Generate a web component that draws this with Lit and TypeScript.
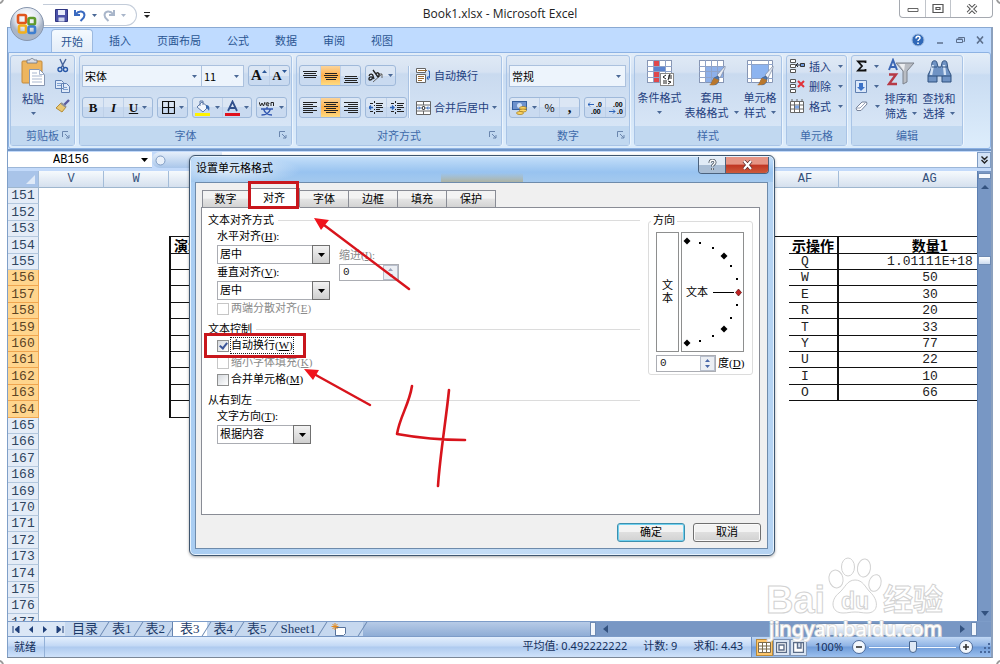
import { LitElement, html, svg, css, nothing } from "lit";
import { customElement } from "lit/decorators.js";
import { classMap } from "lit/directives/class-map.js";

const arrow = html`<svg class="arrow" width="5" height="3" viewBox="0 0 5 3"><path d="M0 0h5L2.500 3z" fill="#4a6896" /></svg>`;

const lines = (rows: number[][]) =>
  html`<svg width="14" height="14" viewBox="0 0 14 14">
    ${rows.map(([y, x1, x2]) => svg`<path d=${`M${x1} ${y}H${x2}`} stroke="#222" stroke-width="1" />`)}
  </svg>`;

const gridIcon = (extra: unknown) => html`<svg width="28" height="28" viewBox="0 0 28 28">
  <rect x="1.500" y="1.500" width="24" height="22" fill="#fff" stroke="#8796b4" />
  <path d="M7.500 1v23M13.500 1v23M19.500 1v23M1 7.500h25M1 12.500h25M1 18.500h25" stroke="#8fa3c8" fill="none" />
  ${extra}
</svg>`;

const brush = svg`<path d="M20 17l-4 2-3 6c4 2 8 0 8-5z" fill="#4d76ad" stroke="#34527c" stroke-width=".6"/><path d="M27 7L19 16l3 3 5-10z" fill="#e9edf5" stroke="#7886a0" stroke-width=".7"/><path d="M16 19l5 2c-1 4-5 6-10 5 3-1 3-5 5-7z" fill="#b9772c"/>`;

@customElement("excel-ribbon")
export class ExcelRibbon extends LitElement {
  static styles = css`
    :host { display: block; }
    * { box-sizing: border-box; }
    button, select, input { font: inherit; color: inherit; margin: 0; }
    button { background: none; border: 0; padding: 0; display: flex; align-items: center; justify-content: center; }
    .tabs { display: flex; height: 25px; padding-left: 42px; padding-right: 6px; background: #bfdbff; border-top: 1px solid #8aa9d2; color: #2a5592; align-items: stretch; }
    .tab { padding: 0 13px; line-height: 23px; }
    .tab.on { background: linear-gradient(#f4faff, #e2ecf8); border: 1px solid #9cb9df; border-bottom: 0; border-radius: 4px 4px 0 0; padding: 0 9px; margin: 1px 3px 0 1px; }
    .tools { margin-left: auto; display: flex; align-items: center; gap: 10px; }
    .tools button { width: 10px; height: 14px; }
    .tools .help { width: 14px; }
    .ribbon { display: grid; grid-template-columns: 65px 213px 206px 124px 148px 61px 112px; gap: 4px; height: 97px; padding: 2px 1px 2px; background: linear-gradient(#e3edf8 0, #d3e2f4 20px, #c9dcf2 22px, #dcecfb 90px); border: 1px solid #8db2e3; border-radius: 0 3px 3px 3px; color: #1f4080; line-height: 15px; }
    .group { border: 1px solid #a9c4e6; border-radius: 3px; display: flex; flex-direction: column; background: linear-gradient(#dfe9f5 0, #d6e2f2 16px, #c9daef 18px, #dce9f8 100%); box-shadow: 1px 0 0 #edf5fd; min-width: 0; }
    .body { flex: 1; display: flex; min-height: 0; }
    .name { height: 19px; background: #c1d8f0; color: #3e6aaa; display: flex; justify-content: center; align-items: center; position: relative; }
    .launch { position: absolute; right: 4px; top: 5px; width: 8px; height: 8px; }
    .rows { display: flex; flex-direction: column; gap: 11px; padding: 9px 0 0 2px; }
    .row { display: flex; gap: 4px; height: 21px; }
    .set { display: flex; border: 1px solid #9fb9da; border-radius: 3px; background: linear-gradient(#dbe6f4 50%, #c9daf0 50%); align-items: stretch; }
    .set button { width: 20px; gap: 4px; color: #111; }
    .set button + button { border-left: 1px solid #bed0e8; }
    .set .wide { width: 29px; }
    .set .hot { background: linear-gradient(#fbd49a, #ffb14d 50%, #ffdc80); }
    .serif { font-family: "Liberation Serif", serif; font-weight: bold; font-size: 13px; }
    .serif.big { font-size: 15px; }
    .set .sized { gap: 0; align-items: center; }
    .combo { display: grid; height: 22px; border: 1px solid #abc1de; background: #edf4fc; color: #000; }
    .combo select { grid-area: 1 / 1; appearance: none; border: 0; background: none; padding: 0 2px; width: 100%; outline: 0; }
    .combo .arrow { grid-area: 1 / 1; justify-self: end; align-self: center; margin-right: 4px; pointer-events: none; }
    .face { width: 120px; }
    .size { width: 43px; margin-left: -5px; }
    .fmt { width: 117px; }
    .sep { width: 2px; margin: 10px 4px 8px 1px; border-left: 1px solid #a9c2e2; border-right: 1px solid #f2f8ff; }
    .plain { display: flex; align-items: center; justify-content: flex-start; gap: 3px; height: 21px; white-space: nowrap; }
    .big-btn { flex-direction: column; justify-content: flex-start; text-align: center; white-space: nowrap; padding-top: 2px; }
    .big-btn span { display: flex; align-items: center; justify-content: center; gap: 5px; height: 15px; }
    .big-btn svg.pic { margin-bottom: 3px; }
    .paste { width: 44px; }
    .stack { display: flex; flex-direction: column; }
    .stack button { height: 20px; gap: 4px; }
    .stack .arrow { margin-left: 3px; }
    .styles { width: 49px; padding-top: 3px; }
    .styles > svg { margin-bottom: 3px; }
    .styles.mid { width: 55px; }
    .styles.end { width: 42px; }
    .edit { width: 38px; }
    .edits { width: 30px; }
  `;

  private launcher(label: string) {
    return html`<button class="launch" aria-label=${label}><svg width="8" height="8" viewBox="0 0 8 8"><path d="M.5 6V.5H6M3 3l4 4M7 4v3H4" fill="none" stroke="#6a86ae" /></svg></button>`;
  }

  render() {
    return html`
      <nav class="tabs">
        <button class="tab on">开始</button>
        ${["插入", "页面布局", "公式", "数据", "审阅", "视图"].map((t) => html`<button class="tab">${t}</button>`)}
        <div class="tools">
          <button class="help" aria-label="帮助"><svg width="14" height="14" viewBox="0 0 14 14"><circle cx="7" cy="7" r="6" fill="#2f68b8" stroke="#9cb8dc" /><path d="M5 5.500c0-3 4-3 4-.5 0 1.500-2 1.500-2 3M7 9.500v1.500" stroke="#fff" stroke-width="1.500" fill="none" /></svg></button>
          <button aria-label="最小化"><svg width="8" height="8" viewBox="0 0 8 8"><path d="M1 7h6" stroke="#5c6f8c" stroke-width="1.500" /></svg></button>
          <button aria-label="还原"><svg width="9" height="8" viewBox="0 0 9 8"><path d="M2.500 2.500v-1h6v4h-1M.5 3.500h6v3h-6zM.5 3h6" stroke="#5c6f8c" fill="none" /></svg></button>
          <button aria-label="关闭"><svg width="8" height="8" viewBox="0 0 8 8"><path d="M1 .5l6 7M7 .5l-6 7" stroke="#5c6f8c" stroke-width="1.600" /></svg></button>
        </div>
      </nav>
      <div class="ribbon">
        <section class="group">
          <div class="body">
            <button class="big-btn paste">
              <svg class="pic" width="26" height="30" viewBox="0 0 26 30"><rect x="2" y="3" width="20" height="22" rx="1" fill="#edb55e" stroke="#c3893a" /><path d="M7 5V2h3c0-2 4-2 4 0h3v3z" fill="#d8dce4" stroke="#6d7480" stroke-width=".8" /><path d="M9.500 11.500h10l5 5v11h-15z" fill="#fff" stroke="#8796b0" /><path d="M19.500 11.500v5h5M12 15h5M12 18h10M12 21h10M12 24h10" fill="none" stroke="#a9b7cf" /></svg>
              <span>粘贴</span><span>${arrow}</span>
            </button>
            <div class="stack">
              <button aria-label="剪切"><svg width="14" height="16" viewBox="0 0 14 16"><path d="M4 1l4 9M10 1L5 10" stroke="#44629a" stroke-width="1.400" /><circle cx="4" cy="11.500" r="2" fill="none" stroke="#2858a8" stroke-width="1.400" /><circle cx="9.500" cy="11.500" r="2" fill="none" stroke="#2858a8" stroke-width="1.400" /></svg></button>
              <button aria-label="复制"><svg width="15" height="14" viewBox="0 0 15 14"><path d="M.5 1.500h6l2 2v6h-8zM6.500 4.500h5l3 3v6h-8z" fill="#dfeaf9" stroke="#6081b4" /><path d="M2 4.500h4M2 6.500h4M8 8.500h4M8 10.500h5" stroke="#7ea0d0" /></svg></button>
              <button aria-label="格式刷"><svg width="15" height="14" viewBox="0 0 15 14"><path d="M14 1L9 6" stroke="#5a5ca0" stroke-width="2.400" /><path d="M6 4l5 4-4 5-6-4z" fill="#e9c772" stroke="#b58c36" /><path d="M6 4l5 4" stroke="#8d9099" stroke-width="2" /></svg></button>
            </div>
          </div>
          <div class="name">剪贴板${this.launcher("剪贴板选项")}</div>
        </section>

        <section class="group">
          <div class="body rows">
            <div class="row">
              <label class="combo face"><select aria-label="字体"><option>宋体</option></select>${arrow}</label>
              <label class="combo size"><select aria-label="字号"><option>11</option></select>${arrow}</label>
              <div class="set">
                <button class="serif big sized" aria-label="增大字号">A<svg width="5" height="12" viewBox="0 0 5 12"><path d="M0 3h5L2.500 0z" fill="#2b5797" /></svg></button>
                <button class="serif sized" aria-label="减小字号">A<svg width="5" height="12" viewBox="0 0 5 12"><path d="M0 0h5L2.500 3z" fill="#2b5797" /></svg></button>
              </div>
            </div>
            <div class="row">
              <div class="set"><button class="serif">B</button><button class="serif"><i>I</i></button><button class="serif wide"><u>U</u>${arrow}</button></div>
              <div class="set"><button class="wide" aria-label="边框"><svg width="13" height="13" viewBox="0 0 13 13"><path d="M.5.5h12v12H.5zM6.500 0v13M0 6.500h13" fill="none" stroke="#111" stroke-width="1.200" /></svg>${arrow}</button></div>
              <div class="set">
                <button class="wide" aria-label="填充颜色"><svg width="16" height="16" viewBox="0 0 16 16"><path d="M2 7l5-5 6 5-5 5z" fill="#f3f7fd" stroke="#5f7ba8" /><path d="M5 6V1h3v4" fill="none" stroke="#5f7ba8" /><path d="M11 5c3 0 4 2 3 6-1-2-2-3-3-3z" fill="#3869ae" /><rect y="13" width="15" height="3" fill="#fff200" /></svg>${arrow}</button>
                <button class="wide" aria-label="字体颜色"><svg width="15" height="16" viewBox="0 0 15 16"><path d="M3 11L7.500 1.500 12 11M5 8h5" fill="none" stroke="#30508c" stroke-width="1.800" /><rect y="13" width="15" height="3" fill="#e0101c" /></svg>${arrow}</button>
              </div>
              <div class="set"><button class="wide" aria-label="拼音"><svg width="16" height="16" viewBox="0 0 16 16"><path d="M0 2l1.500 4L3 3l1.500 3L6 2M7 4h3c0-2-3-2-3 0s2 2 3 1.500M12 6V2.500h2.500V6" fill="none" stroke="#222" /><path d="M2 9h12M8 7v2M4.500 9c1 3 4 6 8.500 6M11.500 9c-1 3-4 6-9 6" fill="none" stroke="#3156b0" stroke-width="1.400" /></svg>${arrow}</button></div>
            </div>
          </div>
          <div class="name">字体${this.launcher("字体选项")}</div>
        </section>

        <section class="group">
          <div class="body">
            <div class="rows">
              <div class="row">
                <div class="set">
                  <button aria-label="顶端对齐">${lines([[2.500, 0, 14], [4.500, 1, 13], [6.500, 0, 14], [8.500, 1, 13]])}</button>
                  <button class="hot" aria-label="垂直居中">${lines([[4.500, 1, 13], [6.500, 0, 14], [8.500, 1, 13], [10.500, 2, 12]])}</button>
                  <button aria-label="底端对齐">${lines([[7.500, 1, 13], [9.500, 0, 14], [11.500, 1, 13], [13.500, 0, 14]])}</button>
                </div>
                <div class="set"><button class="wide" aria-label="方向"><svg width="16" height="14" viewBox="0 0 16 14"><path d="M5 13L14 5M14 9V5h-4" fill="none" stroke="#666" /><path d="M1 7c1-3 4-2 4 0l1 3M4 8C1 7 0 11 2 11s3-2 2-3M5 1l5 7M8 5c1-3 5 0 2 3" fill="none" stroke="#222" stroke-width="1.300" /></svg>${arrow}</button></div>
              </div>
              <div class="row">
                <div class="set">
                  <button aria-label="左对齐">${lines([[1.500, 0, 14], [3.500, 0, 10], [5.500, 0, 14], [7.500, 0, 10], [9.500, 0, 14], [11.500, 0, 10]])}</button>
                  <button class="hot" aria-label="居中">${lines([[1.500, 0, 14], [3.500, 2, 12], [5.500, 0, 14], [7.500, 2, 12], [9.500, 0, 14], [11.500, 2, 12]])}</button>
                  <button aria-label="右对齐">${lines([[1.500, 0, 14], [3.500, 4, 14], [5.500, 0, 14], [7.500, 4, 14], [9.500, 0, 14], [11.500, 4, 14]])}</button>
                </div>
                <div class="set">
                  ${["减少缩进量", "增加缩进量"].map((t, i) => html`<button aria-label=${t}><svg width="14" height="14" viewBox="0 0 14 14"><path d="M1 2.500h3M7 2.500h7M7 4.500h6M7 6.500h7M7 8.500h4M1 10.500h3M7 10.500h7M5.500 0v2M5.500 4v1M5.500 8v1M5.500 11v2" stroke="#222" fill="none" /><path d=${i ? "M0 6.500h4M2 4.500l2 2-2 2" : "M4 6.500H0M2 4.500l-2 2 2 2"} stroke="#2b62b8" fill="none" stroke-width="1.300" /></svg></button>`)}
                </div>
              </div>
            </div>
            <div class="sep"></div>
            <div class="rows">
              <button class="plain"><svg width="15" height="15" viewBox="0 0 15 15"><path d="M.5.5h9v4h-9zM.5 6.500h9v8h-9z" fill="#fff" stroke="#666" /><path d="M2 2.500h9M2 8.500h6M2 10.500h6M2 12.500h4" stroke="#9a6a30" /><path d="M12 3h1.500v7H11M12.500 8L11 10l1.500 2" fill="none" stroke="#2b62b8" /></svg>自动换行</button>
              <button class="plain"><svg width="15" height="14" viewBox="0 0 15 14"><path d="M.5.5h14v13H.5zM.5 4h14M.5 10h14M7.500 0v4M7.500 10v4" fill="#fff" stroke="#666" /><path d="M1 7h3M14 7h-3M3 5.500L4.500 7 3 8.500M12 5.500L10.500 7 12 8.500" stroke="#2b62b8" fill="none" /><circle cx="7.500" cy="7" r="1.500" fill="none" stroke="#111" /></svg>合并后居中 ${arrow}</button>
            </div>
          </div>
          <div class="name">对齐方式${this.launcher("对齐选项")}</div>
        </section>

        <section class="group">
          <div class="body rows">
            <div class="row"><label class="combo fmt"><select aria-label="数字格式"><option>常规</option></select>${arrow}</label></div>
            <div class="row">
              <div class="set">
                <button class="wide" aria-label="会计数字格式"><svg width="16" height="15" viewBox="0 0 16 15"><rect x=".5" y="1.500" width="14" height="8" fill="#6e92cc" stroke="#355f9e" /><circle cx="7.500" cy="5.500" r="2.500" fill="#cfe0f6" /><ellipse cx="11" cy="8" rx="3.500" ry="1.500" fill="#ffd866" stroke="#9c7418" stroke-width=".7" /><ellipse cx="11" cy="10.500" rx="3.500" ry="1.500" fill="#ffd866" stroke="#9c7418" stroke-width=".7" /><ellipse cx="8" cy="13" rx="3.500" ry="1.500" fill="#ffd866" stroke="#9c7418" stroke-width=".7" /></svg>${arrow}</button>
                <button>%</button><button class="serif big" aria-label="千位分隔">,</button>
              </div>
              <div class="set">
                ${["增加小数位数", "减少小数位数"].map((t, i) => html`<button aria-label=${t}><svg width="14" height="14" viewBox="0 0 14 14" font-family="Liberation Sans" font-size="7" font-weight="bold"><text x=${i ? 4 : 8} y="6">${i ? ".00" : ".0"}</text><text x=${i ? 8 : 3} y="13">${i ? ".0" : ".00"}</text><path d=${i ? "M0 10.500h6M4 8.500l2 2-2 2" : "M6 3.500H0M2 1.500l-2 2 2 2"} stroke="#2b62b8" fill="none" /></svg></button>`)}
              </div>
            </div>
          </div>
          <div class="name">数字${this.launcher("数字选项")}</div>
        </section>

        <section class="group">
          <div class="body">
            <button class="big-btn styles">
              ${gridIcon(svg`<path d="M8 2h5v5H8zM8 13h5v5H8z" fill="#e0484c"/><path d="M8 8h11v4H8z" fill="#5b84cf"/><path d="M8 19h5v4H8z" fill="#e0484c"/><rect x="14.500" y="14.500" width="13" height="12" fill="#fff" stroke="#888"/><path d="M20 16l-3 2 3 2M17 22h4M17 24h4M22 17h4M22 19h4M22 22l3 1-3 2M24 15l-2 6" fill="none" stroke="#222"/>`)}
              <span>条件格式</span><span>${arrow}</span>
            </button>
            <button class="big-btn styles mid">
              ${gridIcon(svg`<path d="M8 8h5v4H8zM14 8h5v4h-5zM20 8h5v4h-5zM8 13h5v5H8zM14 13h5v5h-5zM20 13h5v5h-5zM8 19h5v4H8zM14 19h5v4h-5z" fill="#8db0ea"/>${brush}`)}
              <span>套用</span><span>表格格式 ${arrow}</span>
            </button>
            <button class="big-btn styles end">
              <svg width="28" height="28" viewBox="0 0 28 28"><path d="M1.500 1.500h25v22h-25z" fill="#fff" stroke="#8796b4" /><path d="M5.500 1v23M22.500 1v23M1 5.500h26M1 19.500h26" stroke="#8fa3c8" /><path d="M6 6h16v13H6z" fill="#8db4f0" />${brush}</svg>
              <span>单元格</span><span>样式 ${arrow}</span>
            </button>
          </div>
          <div class="name">样式</div>
        </section>

        <section class="group">
          <div class="body stack">
            ${["插入", "删除", "格式"].map((t, i) => html`<button><svg width="15" height="14" viewBox="0 0 15 14">
              ${i < 2
                ? svg`<path d="M.5.500h5v3h-5zM.5 5.500h5v3h-5zM.5 10.500h5v3h-5z" fill="#fff" stroke="#555"/>`
                : svg`<path d="M.5 2.500h13v11h-13zM.5 6h13M.5 10h13M4.500 2v12M9.500 2v12M2 0v2M7 0v2M12 0v2" fill="#fff" stroke="#666"/><path d="M5 6.500h4v3H5z" fill="#7ea6e4"/>`}
              ${i === 0 ? svg`<path d="M6 6h4M8 4L6 6l2 2M10.500 4.500h4v3h-4z" fill="#6f9ade" stroke="#333"/>` : nothing}
              ${i === 1 ? svg`<path d="M8 2l6 6M14 2L8 8" stroke="#e0323a" stroke-width="2"/>` : nothing}
            </svg>${t}${arrow}</button>`)}
          </div>
          <div class="name">单元格</div>
        </section>

        <section class="group">
          <div class="body">
            <div class="stack edits">
              <button aria-label="求和"><svg width="11" height="12" viewBox="0 0 11 12"><path d="M9.500 3V1.500H2L6 6l-4 4.500h7.500V9" fill="none" stroke="#111" stroke-width="1.800" /></svg>${arrow}</button>
              <button aria-label="填充"><svg width="12" height="13" viewBox="0 0 12 13"><path d="M.5.500h11v12H.5z" fill="#dbe8fa" stroke="#5f7fb0" /><path d="M4 3h4v4h2l-4 4-4-4h2z" fill="#3b72c8" /></svg>${arrow}</button>
              <button aria-label="清除"><svg width="13" height="11" viewBox="0 0 13 11"><path d="M1 7l6-6h4.500l.5 2-6 6.500H2z" fill="#fdfdff" stroke="#77839a" /><path d="M1 7h4l6-6" fill="none" stroke="#99a4b8" /></svg>${arrow}</button>
            </div>
            <button class="big-btn edit">
              <svg class="pic" width="28" height="30" viewBox="0 0 28 30"><path d="M9 5h18l-7 8v11l-4 2V13z" fill="#b9bdc4" stroke="#7c828c" /><path d="M12 6h6l-1 7z" fill="#eceef1" /><path d="M2 12L6 2l4 10M3.500 9h5" fill="none" stroke="#3b66b4" stroke-width="2" /><path d="M2 16.500h7L2 26h8" fill="none" stroke="#b63a46" stroke-width="2.400" /></svg>
              <span>排序和</span><span>筛选 ${arrow}</span>
            </button>
            <button class="big-btn edit">
              <svg class="pic" width="28" height="30" viewBox="0 0 28 30"><path d="M7 5c0-3 5-3 5 0l1 4h3l1-4c0-3 5-3 5 0l1 6 3 6v7h-9v-6h-5v6H3v-7l3-6z" fill="#6f93c4" stroke="#2f517f" /><path d="M6 17l2-10M20 17l-1-10" stroke="#d5e4f6" stroke-width="2.400" /><path d="M3 18h9M17 18h9M7 9h5M17 9h5" stroke="#2f517f" /></svg>
              <span>查找和</span><span>选择 ${arrow}</span>
            </button>
          </div>
          <div class="name">编辑</div>
        </section>
      </div>`;
  }
}

interface DataRow { name: string; amount: string; }
const data: DataRow[] = [
  { name: "Q", amount: "1.01111E+18" }, { name: "W", amount: "50" }, { name: "E", amount: "30" },
  { name: "R", amount: "20" }, { name: "T", amount: "33" }, { name: "Y", amount: "77" },
  { name: "U", amount: "22" }, { name: "I", amount: "10" }, { name: "O", amount: "66" },
];

@customElement("excel-sheet")
export class ExcelSheet extends LitElement {
  static styles = css`
    :host { display: flex; min-height: 0; overflow: hidden; background: #fff; }
    * { box-sizing: border-box; }
    .cells { flex: 1; overflow: hidden; min-width: 0; }
    table { border-collapse: separate; border-spacing: 0; table-layout: fixed; width: 1013px; font: 13px/14px "Liberation Mono", "Noto Sans CJK SC", monospace; color: #222; }
    td, th { padding: 0; white-space: nowrap; text-align: center; font-weight: normal; }
    thead th { height: 17px; font-size: 12px; color: #34507a; background: linear-gradient(#f6fafd, #d5e0ee); border-right: 1px solid #a3bcd8; border-bottom: 1px solid #9eb6ce; }
    thead th.corner { background: #a9c4e9; }
    .corner svg { display: block; margin-left: auto; }
    tbody tr { height: 16px; }
    tbody tr:nth-child(5n + 2), tbody tr:nth-child(5n + 4) { height: 17px; }
    tbody td, tbody th { padding-top: 1px; }
    tbody th { background: #e4ecf7; color: #2f4560; border-right: 1px solid #9eb6ce; border-bottom: 1px solid #b4c8de; }
    tbody th.sel { background: #ffd58d; border-color: #f0a650; color: #5b4425; }
    .c-row { width: 31px; } .c-v { width: 65px; } .c-w { width: 65px; } .c-x { width: 603px; } .c-gap { width: 17px; } .c-af { width: 50px; } .c-ag { width: 182px; }
    .x { border-left: 2px solid #111; border-bottom: 1px solid #111; }
    .line { border-bottom: 1px solid #111; }
    .af { border-bottom: 1px solid #111; border-right: 2px solid #111; padding-right: 16px; }
    .ag { border-bottom: 1px solid #111; }
    .title { font: bold 14px/15px "Noto Sans CJK SC", sans-serif; color: #000; padding: 0; }
    .left { text-align: left; padding-left: 3px; }
    .bar { width: 14px; background: #7897c4; border-left: 1px solid #5c7fb2; display: flex; flex-direction: column; align-items: center; }
    .bar .split { width: 13px; height: 6px; background: #f4f8fd; border: 1px solid #6d8ab3; margin: 2px 0 6px; }
    .bar .up { flex: 0 0 71px; }
    .bar .thumb { width: 13px; height: 9px; background: linear-gradient(#fff, #cddcf0); border: 1px solid #6d8ab3; }
    .bar .down { margin-top: auto; margin-bottom: 5px; }
  `;

  private cells(n: number) {
    if (n === 153) return html`<td></td><td></td><td class="line"></td><td class="line"></td><td class="line"></td><td class="line"></td>`;
    if (n === 154) return html`<td></td><td></td><td class="x title left">演示操作</td><td></td><td class="af title">示操作</td><td class="ag title">数量1</td>`;
    const row = data[n - 155];
    if (row) return html`<td></td><td></td><td class="x"></td><td></td><td class="af">${row.name}</td><td class="ag">${row.amount}</td>`;
    if (n === 164) return html`<td></td><td></td><td class="x"></td><td></td><td></td><td></td>`;
    return html`<td></td><td></td><td></td><td></td><td></td><td></td>`;
  }

  render() {
    return html`
      <div class="cells">
        <table>
          <colgroup><col class="c-row" /><col class="c-v" /><col class="c-w" /><col class="c-x" /><col class="c-gap" /><col class="c-af" /><col class="c-ag" /></colgroup>
          <thead><tr><th class="corner"><svg width="14" height="12" viewBox="0 0 14 12"><path d="M11 2v9H2z" fill="#dfeaf8" /></svg></th><th>V</th><th>W</th><th></th><th colspan="2">AF</th><th>AG</th></tr></thead>
          <tbody>
            ${Array.from({ length: 27 }, (_, i) => 151 + i).map((n) => html`<tr><th class=${classMap({ sel: n >= 156 && n <= 164 })}>${n}</th>${this.cells(n)}</tr>`)}
          </tbody>
        </table>
      </div>
      <div class="bar">
        <div class="split"></div>
        <svg class="up" width="8" height="71" viewBox="0 0 8 71"><path d="M0 4h8L4 0z" fill="#33527f" /></svg>
        <div class="thumb"></div>
        <svg class="down" width="8" height="5" viewBox="0 0 8 5"><path d="M0 0h8L4 5z" fill="#33527f" /></svg>
      </div>`;
  }
}

@customElement("format-dialog")
export class FormatDialog extends LitElement {
  static styles = css`
    :host { display: block; font: 11px/15px "Liberation Serif", "Noto Sans CJK SC", sans-serif; color: #000; }
    * { box-sizing: border-box; }
    button, select, input { font: inherit; color: inherit; margin: 0; border-radius: 0; }
    .win { border: 1px solid #3f566f; border-radius: 6px; height: 401px; padding: 0 6px 6px 5px; display: flex; flex-direction: column; background: linear-gradient(90deg, #a9cdf2, #c4ddf6 50%, #b5d3f2); box-shadow: inset 0 0 0 1px #e7f3fe, 0 1px 3px #0005; }
    .bar { height: 25px; flex: none; display: flex; justify-content: space-between; margin: 1px -5px 0 -4px; border-radius: 5px 5px 0 0; padding: 0 4px 0 5px; background: linear-gradient(#a5bdd000, #adb3a4) 250px 100% / 82px 9px no-repeat, radial-gradient(ellipse 70px 14px at 40px 13px, #e4effa, transparent), linear-gradient(#c3def9, #98c3f0 60%, #a4c9ee); }
    .bar h2 { font: inherit; font-size: 11px; margin: 4px 0 0; }
    .caps { display: flex; height: 17px; border: 1px solid #4b627e; border-top: 0; border-radius: 0 0 4px 4px; overflow: hidden; }
    .caps button { border: 0; padding: 0; width: 26px; background: linear-gradient(#e1ebf6 50%, #a9bdd4 50%); display: flex; align-items: center; justify-content: center; }
    .caps .close { width: 43px; background: linear-gradient(#e69585 45%, #c03522 50%, #cc5a3c); border-left: 1px solid #4b627e; }
    .client { flex: 1; background: #f0f0f0; border: 1px solid #6e8bab; padding: 7px 7px 6px 5px; display: flex; flex-direction: column; }
    .tabs { display: flex; height: 18px; margin-bottom: -1px; }
    .tabs button { width: 49px; border: 1px solid #898c95; border-left-width: 0; background: linear-gradient(#f3f3f3 45%, #e4e4e4 50%, #d3d3d3); padding: 0; }
    .tabs button:first-child { border-left-width: 1px; margin-left: 1px; width: 47px; }
    .tabs button.on { background: #fff; border-bottom-color: #fff; height: 20px; margin-top: -2px; width: 51px; z-index: 1; }
    .panel { flex: 1; background: #fff; border: 1px solid #898c95; display: flex; padding: 4px 6px 0; gap: 8px; }
    .left { flex: 1; display: flex; flex-direction: column; }
    .head { height: 16px; display: flex; align-items: center; gap: 4px; }
    .head::after { content: ""; flex: 1; height: 1px; background: #dcdcdc; }
    .gap { margin-top: 4px; }
    .field { padding-left: 9px; display: flex; gap: 9px; }
    .stack { display: flex; flex-direction: column; width: 113px; }
    .stack label, .indent label { height: 17px; line-height: 17px; }
    .combo { display: grid; grid-template-columns: 1fr 17px; height: 19px; border: 1px solid #abadb3; background: #fff; }
    .combo.dir { width: 94px; }
    .combo select { grid-area: 1 / 1 / 2 / 3; appearance: none; background: none; border: 0; padding: 0 2px; width: 100%; outline: 0; }
    .drop { grid-area: 1 / 2; margin: -1px -1px -1px 0; border: 1px solid #707070; background: linear-gradient(#f2f2f2, #cfcfcf); display: flex; align-items: center; justify-content: center; pointer-events: none; }
    .indent { display: flex; flex-direction: column; padding-top: 19px; color: #8a8a8a; }
    .spin { display: flex; width: 60px; height: 17px; border: 1px solid #abadb3; background: #fff; }
    .spin input { flex: 1; min-width: 0; border: 0; padding: 0 3px; background: none; outline: 0; color: #222; font-family: "Liberation Mono", monospace; }
    .spin span { width: 15px; border: 1px solid #b8bfcc; background: #eceff4; display: flex; align-items: center; justify-content: center; }
    .check { height: 17px; padding-left: 9px; display: flex; align-items: center; gap: 2px; }
    .check input { appearance: none; width: 12px; height: 12px; border: 1px solid #8e8f8f; background: linear-gradient(135deg, #d5d9de, #fff); display: grid; place-content: center; }
    .check input:checked::before { content: ""; width: 3px; height: 6px; border: solid #3b5598; border-width: 0 2px 2px 0; transform: rotate(38deg); margin-top: -2px; box-sizing: content-box; }
    .check.off { color: #8a8a8a; }
    .check.off input { border-color: #c6c6c6; background: #fff; }
    .check.focus label { outline: 1px dotted #222; }
    fieldset { flex: none; width: 105px; height: 154px; margin: 9px 0 0; border: 1px solid #dcdcdc; border-radius: 3px; padding: 10px 7px 0; display: flex; flex-direction: column; gap: 3px; position: relative; }
    legend { position: absolute; top: -9px; left: 2px; padding: 0 2px; background: #fff; }
    .orient { display: flex; gap: 2px; height: 120px; }
    .vert { width: 23px; border: 1px solid #8e8f8f; background: #fff; padding: 0 5px; line-height: 13px; display: flex; align-items: center; white-space: normal; text-align: center; }
    .dial { width: 63px; border: 1px solid #8e8f8f; display: flex; align-items: center; position: relative; padding-left: 4px; }
    .dial svg { position: absolute; inset: 0; }
    .deg { display: flex; gap: 2px; align-items: center; }
    .foot { display: flex; justify-content: flex-end; gap: 8px; padding-top: 8px; margin-right: -1px; }
    .foot button { width: 68px; height: 19px; border: 1px solid #707070; border-radius: 3px; background: linear-gradient(#f3f3f3 50%, #dfdfdf 50%, #d2d2d2); padding: 0; box-shadow: inset 0 0 0 1px #fafafa; }
    .foot .ok { border-color: #3c8fae; box-shadow: inset 0 0 0 1px #6fd0ef; }
    .marks { position: absolute; left: 0; top: 0; pointer-events: none; z-index: 2; }
  `;

  private key(text: string, k: string, colon = true) {
    return html`${text}(<u>${k}</u>)${colon ? ":" : ""}`;
  }

  private combo(id: string, value: string, cls = "") {
    return html`<div class="combo ${cls}"><select id=${id}><option>${value}</option></select><span class="drop"><svg width="7" height="4" viewBox="0 0 7 4"><path d="M0 0h7L3.500 4z" /></svg></span></div>`;
  }

  private check(id: string, text: string, k: string, cls: string, on = false) {
    return html`<div class="check ${cls}"><input type="checkbox" id=${id} .checked=${on} ?disabled=${cls === "off"} /><label for=${id}>${this.key(text, k, false)}</label></div>`;
  }

  private spin(id: string, off = false) {
    return html`<div class="spin"><input id=${id} .value=${"0"} ?disabled=${off} /><span><svg width="7" height="11" viewBox="0 0 7 11"><path d="M1 4h5L3.500 1zM1 7h5l-2.500 3z" fill=${off ? "#9aa5bb" : "#4a68a8"} /></svg></span></div>`;
  }

  render() {
    const dots = [[18, 10], [31, 15], [49, 33], [55, 46], [55, 72], [49, 85], [31, 103], [18, 108]];
    const diamonds = [[5, 8], [42, 23], [42, 96], [5, 110]];
    return html`
      <div class="win" role="dialog" aria-label="设置单元格格式">
        <div class="bar">
          <h2>设置单元格格式</h2>
          <div class="caps">
            <button aria-label="帮助"><svg width="9" height="12" viewBox="0 0 9 12"><path d="M2 4c0-3.500 5-3.500 5-.5 0 2-2.500 1.500-2.500 4M4.500 9v2" fill="none" stroke="#4a5563" stroke-width="3" /><path d="M2 4c0-3.500 5-3.500 5-.5 0 2-2.500 1.500-2.500 4M4.500 9.300v1.400" fill="none" stroke="#fff" stroke-width="1.400" /></svg></button>
            <button class="close" aria-label="关闭"><svg width="11" height="10" viewBox="0 0 11 10"><path d="M2 1l7 8M9 1L2 9" stroke="#5a2a2a" stroke-width="3.600" /><path d="M2 1l7 8M9 1L2 9" stroke="#fff" stroke-width="2.200" /></svg></button>
          </div>
        </div>
        <div class="client">
          <div class="tabs">${["数字", "对齐", "字体", "边框", "填充", "保护"].map((t, i) => html`<button class=${classMap({ on: i === 1 })}>${t}</button>`)}</div>
          <div class="panel">
            <div class="left">
              <div class="head">文本对齐方式</div>
              <div class="field">
                <div class="stack">
                  <label for="h">${this.key("水平对齐", "H")}</label>${this.combo("h", "居中")}
                  <label for="v">${this.key("垂直对齐", "V")}</label>${this.combo("v", "居中")}
                </div>
                <div class="indent"><label for="ind">${this.key("缩进", "I")}</label>${this.spin("ind", true)}</div>
              </div>
              ${this.check("spread", "两端分散对齐", "E", "off")}
              <div class="head gap">文本控制</div>
              ${this.check("wrap", "自动换行", "W", "focus", true)}
              ${this.check("shrink", "缩小字体填充", "K", "off")}
              ${this.check("merge", "合并单元格", "M", "")}
              <div class="head gap">从右到左</div>
              <div class="field"><div class="stack"><label for="t">${this.key("文字方向", "T")}</label>${this.combo("t", "根据内容", "dir")}</div></div>
            </div>
            <fieldset>
              <legend>方向</legend>
              <div class="orient">
                <button class="vert">文本</button>
                <div class="dial">文本
                  <svg width="61" height="118" viewBox="0 0 61 118">
                    ${dots.map(([x, y]) => svg`<rect x=${x - 1} y=${y - 1} width="2" height="2"/>`)}
                    ${diamonds.map(([x, y]) => svg`<path d=${`M${x} ${y - 3.5}l3.500 3.500-3.500 3.500-3.500-3.500z`}/>`)}
                    <path d="M31 59.500h21" stroke="#000" /><path d="M56.500 56l3 3.500-3 3.500-3-3.500z" fill="#c02020" stroke="#400" stroke-width=".6" />
                  </svg>
                </div>
              </div>
              <div class="deg">${this.spin("deg")}<label for="deg">${this.key("度", "D", false)}</label></div>
            </fieldset>
          </div>
          <div class="foot"><button class="ok">确定</button><button>取消</button></div>
        </div>
      </div>
      <svg class="marks" width="586" height="402" viewBox="189 155 586 402" fill="none" stroke="#d8141c">
        <g stroke-width="3" stroke="#c8161c"><rect x="249.500" y="182.500" width="48" height="25" /><rect x="205.500" y="334.500" width="99" height="22" /></g>
        <g stroke-width="2.400" stroke-linecap="round"><path d="M324 225L409 289M314 374L370 405" /></g>
        <path d="M314 218l15 2-8 10z M304 369l15 1-6 10z" fill="#f0141c" stroke="none" />
        <path d="M412 386C409 405 400 416 397 434Q430 440 465 440M449 390C446 420 440 455 438 486" stroke-width="2.600" stroke-linecap="round" stroke-linejoin="round" />
      </svg>`;
  }
}

@customElement("app-root")
export class AppRoot extends LitElement {
  static styles = css`
    :host { display: flex; flex-direction: column; min-height: 100vh; position: relative; overflow: hidden; background: #fff; box-sizing: border-box; padding: 0 7px 6px; font: 11px/15px "Noto Sans CJK SC", sans-serif; color: #15305c; }
    * { box-sizing: border-box; }
    button, input { font: inherit; color: inherit; margin: 0; }
    button { background: none; border: 0; padding: 0; }
    .title { height: 27px; display: grid; grid-template-columns: 1fr auto 1fr; align-items: center; color: #222; }
    .title h1 { font: 12px/15px "Open Sans", sans-serif; margin: 0; }
    .quick { display: flex; align-items: center; gap: 6px; margin-left: 36px; padding: 0 0 0 12px; height: 22px; width: 94px; border: 1px solid #c3ccd9; border-left: 0; border-radius: 0 11px 11px 0; }
    .left { display: flex; align-items: center; gap: 7px; padding-top: 3px; }
    .quick button, .more { display: flex; align-items: center; gap: 6px; }
    .win { justify-self: end; align-self: start; display: flex; height: 18px; border: 1px solid #a5a9b0; border-top: 0; border-radius: 0 0 4px 4px; }
    .win button { width: 25px; display: flex; align-items: center; justify-content: center; }
    .win button + button { border-left: 1px solid #c0c4ca; }
    .win button:last-child { width: 42px; }
    .orb { position: absolute; left: 9px; top: 6px; z-index: 2; }
    .frame { flex: 1; display: flex; flex-direction: column; border-left: 1px solid #7f9fc8; border-right: 2px solid #8ba0bd; background: #bfdbff; border-bottom: 1px solid #7a8797; min-height: 0; }
    .formula { display: flex; height: 22px; background: #c3dafa; border-top: 2px solid #6f94c6; padding: 1px 0 3px; }
    .ref { width: 144px; border: 1px solid #9db7d8; border-width: 0 0 1px; background: #fff; display: flex; align-items: center; padding-right: 4px; color: #000; }
    .ref input { border: 0; outline: 0; padding: 0 0 0 45px; background: none; flex: 1; min-width: 0; font: 12px/14px "Liberation Mono", monospace; }
    .fx { width: 70px; background: linear-gradient(#e6effa, #a9c6ea); border-radius: 8px 0 0 8px; display: flex; align-items: center; padding-left: 3px; }
    .text { flex: 1; background: #fff; border: 0; border-bottom: 1px solid #9db7d8; outline: 0; min-width: 0; padding: 0; }
    .expand { width: 14px; background: #d2e2f6; border: 1px solid #7f9cc4; display: flex; align-items: center; justify-content: center; }
    excel-sheet { flex: 1 1 0; }
    .strip { height: 16px; display: flex; background: linear-gradient(#b7cbe7, #8fadd6); border-top: 1px solid #7d9cc8; border-bottom: 1px solid #7d9cc8; }
    .nav { display: flex; gap: 8px; align-items: center; padding: 0 1px 0 4px; background: #dbe7f6; }
    .sheets { display: flex; font: 13px/14px "Liberation Serif", "Noto Sans CJK SC", serif; color: #1c3a68; background: #c6d8ef; }
    .sheets button { padding: 0 7px; position: relative; white-space: nowrap; }
    .sheets button::after { content: ""; position: absolute; right: 0; top: 0; bottom: 0; border-right: 1px solid #6785b0; transform: skewX(-32deg); }
    .sheets button.on { background: #fff; border-left: 1px solid #6785b0; }
    .sheets .new { width: 40px; padding: 0 8px; }
    .sheets .new svg { display: block; }
    .hbar { margin-left: auto; display: flex; align-items: center; width: 401px; background: #7897c4; padding: 0 13px 0 0; }
    .tick { width: 6px; height: 14px; background: #f3f7fc; border: 1px solid #6d8ab3; margin-right: 7px; }
    .thumb { width: 104px; height: 13px; margin: 0 38px 0 auto; background: linear-gradient(#fff, #bed1ea); border: 1px solid #6d8ab3; border-radius: 2px; }
    .hbar .tick.end { margin: 0 1px 0 6px; }
    .status { height: 20px; display: flex; align-items: stretch; background: linear-gradient(#e4effd, #c2d8f5 45%, #aecaef 50%, #cfe2fa); color: #15305c; line-height: 18px; }
    .ready { padding: 0 8px 0 6px; border-right: 1px solid #93b1d8; }
    .sums { margin-left: auto; display: flex; gap: 16px; padding-right: 8px; font-family: "Noto Sans", "Noto Sans CJK SC", sans-serif; }
    .views { width: 240px; flex: none; display: flex; align-items: center; border-left: 1px solid #6e8fc0; background: linear-gradient(#c1d8f5, #8fb3e4 45%, #6f9bd8 50%, #9cc0ee); padding: 0 0 0 4px; font-family: "Noto Sans", sans-serif; }
    .views button { height: 17px; width: 17px; display: flex; align-items: center; justify-content: center; border: 1px solid #7f95b6; background: #d9e4f2; }
    .views button.on { background: #ffc76b; border-color: #b98a3a; }
    .views .round { width: 14px; height: 14px; border-radius: 50%; border-color: #4c6a9a; background: #f2f7fd; padding: 0; flex: none; }
    .pct { margin: 0 9px 0 8px; }
    .zoom { appearance: none; width: 87px; height: 14px; margin: 0 3px; background: linear-gradient(#f3f8ff, #f3f8ff) center / 100% 1px no-repeat; }
    .zoom::-webkit-slider-thumb { appearance: none; width: 8px; height: 12px; background: #dfe9f6; border: 1px solid #47658f; border-radius: 1px 1px 4px 4px; }
    .grip { margin-left: auto; }
    format-dialog { position: absolute; left: 189px; top: 155px; width: 586px; z-index: 3; }
    .mark { position: absolute; right: 50px; bottom: 16px; z-index: 4; pointer-events: none; }
    .knob { position: absolute; width: 10px; height: 10px; border: 2px solid #9a9a9a; border-radius: 50%; }
    .tl { left: -6px; top: -6px; } .tr { right: -6px; top: -6px; } .bl { left: -6px; bottom: -6px; } .br { right: -6px; bottom: -6px; }
  `;

  render() {
    return html`
      <span class="knob tl"></span><span class="knob tr"></span><span class="knob bl"></span><span class="knob br"></span>
      <svg class="orb" width="36" height="36" viewBox="0 0 36 36">
        <defs><radialGradient id="g" cy=".3"><stop offset="0" stop-color="#fff" /><stop offset=".7" stop-color="#dfe5ee" /><stop offset="1" stop-color="#a9b5c8" /></radialGradient></defs>
        <circle cx="18" cy="18" r="16.500" fill="url(#g)" stroke="#8796ae" />
        <g fill="none" stroke-width="2.600"><rect x="9" y="9" width="8" height="8" rx="1.500" stroke="#e0561e" /><rect x="19.500" y="12" width="6.500" height="6.500" rx="1.500" stroke="#5f9a2c" /><rect x="10" y="19.500" width="7" height="7" rx="1.500" stroke="#f2b01e" /><rect x="19.500" y="20.500" width="6.500" height="6.500" rx="1.500" stroke="#3f7fd0" /></g>
      </svg>
      <header class="title">
        <div class="left">
          <div class="quick">
            <button aria-label="保存"><svg width="13" height="13" viewBox="0 0 13 13"><path d="M.5.500h12v12H.5z" fill="#4b52a8" stroke="#2e3480" /><path d="M3 1h7v5H3z" fill="#e9eefb" /><path d="M3.500 8.500h6v4h-6z" fill="#cfd6ee" /></svg></button>
            <button aria-label="撤消"><svg width="12" height="13" viewBox="0 0 12 13"><path d="M1 1v5h5M1.500 5.500C5 1 10 2 10.500 6c0 3-2 4-4 6" fill="none" stroke="#3a6ac0" stroke-width="2" /></svg>${arrow}</button>
            <button aria-label="恢复"><svg width="12" height="13" viewBox="0 0 12 13"><path d="M11 1v5H6M10.500 5.500C7 1 2 2 1.500 6c0 3 2 4 4 6" fill="none" stroke="#a9b6ca" stroke-width="2" /></svg><svg width="5" height="3" viewBox="0 0 5 3"><path d="M0 0h5L2.500 3z" fill="#a9b6ca" /></svg></button>
          </div>
          <button class="more" aria-label="自定义快速访问工具栏"><svg width="6" height="6" viewBox="0 0 6 6"><path d="M0 .5h6" stroke="#222" /><path d="M0 3h6L3 6z" fill="#222" /></svg></button>
        </div>
        <h1>Book1.xlsx - Microsoft Excel</h1>
        <div class="win">
          <button aria-label="最小化"><svg width="12" height="6" viewBox="0 0 12 6"><path d="M1 1.500h10v3H1z" fill="#fff" stroke="#666" transform="translate(0 1)" /></svg></button>
          <button aria-label="最大化"><svg width="12" height="10" viewBox="0 0 12 10"><path d="M1 .5h10v8H1zM4 3.500h4v2H4z" fill="#fff" stroke="#555" stroke-width="1.200" /></svg></button>
          <button aria-label="关闭"><svg width="12" height="10" viewBox="0 0 12 10"><path d="M2 1l8 8M10 1L2 9" stroke="#555" stroke-width="3.600" /><path d="M2 1l8 8M10 1L2 9" stroke="#fff" stroke-width="1.600" /></svg></button>
        </div>
      </header>
      <main class="frame">
        <excel-ribbon></excel-ribbon>
        <div class="formula">
          <div class="ref"><input aria-label="名称框" .value=${"AB156"} /><svg width="7" height="4" viewBox="0 0 7 4"><path d="M0 0h7L3.500 4z" /></svg></div>
          <div class="fx"><svg width="11" height="11" viewBox="0 0 11 11"><circle cx="5.500" cy="5.500" r="4.500" fill="#e9f0f9" stroke="#7f9cc4" /></svg></div>
          <input class="text" aria-label="编辑栏" />
          <button class="expand" aria-label="展开"><svg width="7" height="8" viewBox="0 0 7 8"><path d="M.5.500l3 3 3-3M.5 4l3 3 3-3" fill="none" stroke="#222" stroke-width="1.400" /></svg></button>
        </div>
        <excel-sheet></excel-sheet>
        <div class="strip">
          <div class="nav">
            ${["M1 0v7M7 0L3 3.500 7 7z", "M5 0L1 3.500 5 7z", "M1 0l4 3.500L1 7z", "M7 0v7M1 0l4 3.500L1 7z"].map((d, i) => html`<svg width=${i % 3 ? 6 : 8} height="7" viewBox=${`0 0 ${i % 3 ? 6 : 8} 7`}><path d=${d} fill="#1f3f78" stroke=${i % 3 ? "none" : "#1f3f78"} /></svg>`)}
          </div>
          <div class="sheets">
            ${["目录", "表1", "表2", "表3", "表4", "表5", "Sheet1"].map((t) => html`<button class=${classMap({ on: t === "表3" })}>${t}</button>`)}
            <button class="new" aria-label="插入工作表"><svg width="16" height="13" viewBox="0 0 16 13"><path d="M4.500 4.500h10v6l-2 2h-8z" fill="#fff" stroke="#58739c" /><path d="M4 0v7M.5 3.500h7M1.500 1l5 5M6.500 1l-5 5" stroke="#e58a1c" /></svg></button>
          </div>
          <div class="hbar"><span class="tick"></span><svg width="5" height="8" viewBox="0 0 5 8"><path d="M5 0v8L0 4z" fill="#33527f" /></svg><span class="thumb"></span><svg width="5" height="8" viewBox="0 0 5 8"><path d="M0 0v8l5-4z" fill="#33527f" /></svg><span class="tick end"></span></div>
        </div>
        <footer class="status">
          <span class="ready">就绪</span>
          <div class="sums"><span>平均值: 0.492222222</span><span>计数: 9</span><span>求和: 4.43</span></div>
          <div class="views">
            <button class="on" aria-label="普通"><svg width="13" height="11" viewBox="0 0 13 11"><path d="M.5.500h12v10H.5zM.5 4h12M.5 7h12M4.500 0v11M8.500 0v11" fill="#fff" stroke="#7b6a4c" /></svg></button>
            <button aria-label="页面布局"><svg width="11" height="11" viewBox="0 0 11 11"><path d="M.5.500h10v10H.5zM3 3h5v5H3z" fill="#fff" stroke="#5b6c88" stroke-width="1.400" /></svg></button>
            <button aria-label="分页预览"><svg width="11" height="11" viewBox="0 0 11 11"><path d="M.5.500h10v10H.5zM4.500 0v6H8V0" fill="#fff" stroke="#5b6c88" stroke-width="1.400" /></svg></button>
            <span class="pct">100%</span>
            <button class="round" aria-label="缩小"><svg width="8" height="8" viewBox="0 0 8 8"><path d="M1 4h6" stroke="#333" stroke-width="1.600" /></svg></button>
            <input class="zoom" type="range" aria-label="显示比例" />
            <button class="round" aria-label="放大"><svg width="8" height="8" viewBox="0 0 8 8"><path d="M1 4h6M4 1v6" stroke="#333" stroke-width="1.600" /></svg></button>
            <svg class="grip" width="11" height="11" viewBox="0 0 11 11"><path d="M8 1h2v2H8zM4 5h2v2H4zM8 5h2v2H8zM0 9h2v2H0zM4 9h2v2H4zM8 9h2v2H8z" fill="#48689c" /></svg>
          </div>
        </footer>
      </main>
      <format-dialog></format-dialog>
      <svg class="mark" width="184" height="92" viewBox="0 0 184 92" fill="#fff" stroke="#d2d2d2">
        <ellipse cx="70" cy="23" rx="7" ry="9" transform="rotate(-12 70 23)" /><ellipse cx="82" cy="11" rx="6.500" ry="9" /><ellipse cx="98" cy="12" rx="6.500" ry="9" transform="rotate(8 98 12)" /><ellipse cx="109" cy="27" rx="6" ry="8.500" transform="rotate(15 109 27)" />
        <path d="M89 24c8 0 10 7 15 12 9 8 9 21-3 21-5 0-7-1-12-1s-7 1-12 1c-12 0-13-13-4-20 6-5 8-13 16-13z" />
        <g font-family="Liberation Sans" font-weight="bold"><text x="0" y="57" font-size="38">Bai</text><text x="75" y="53" font-size="23">du</text><text x="117" y="54" font-size="30" font-family="Noto Sans CJK SC">经验</text></g>
        <text x="3" y="80" font-size="20" font-family="Noto Sans" stroke="#dcdcdc" stroke-width="2" paint-order="stroke">jingyan.baidu.com</text>
      </svg>`;
  }
}
